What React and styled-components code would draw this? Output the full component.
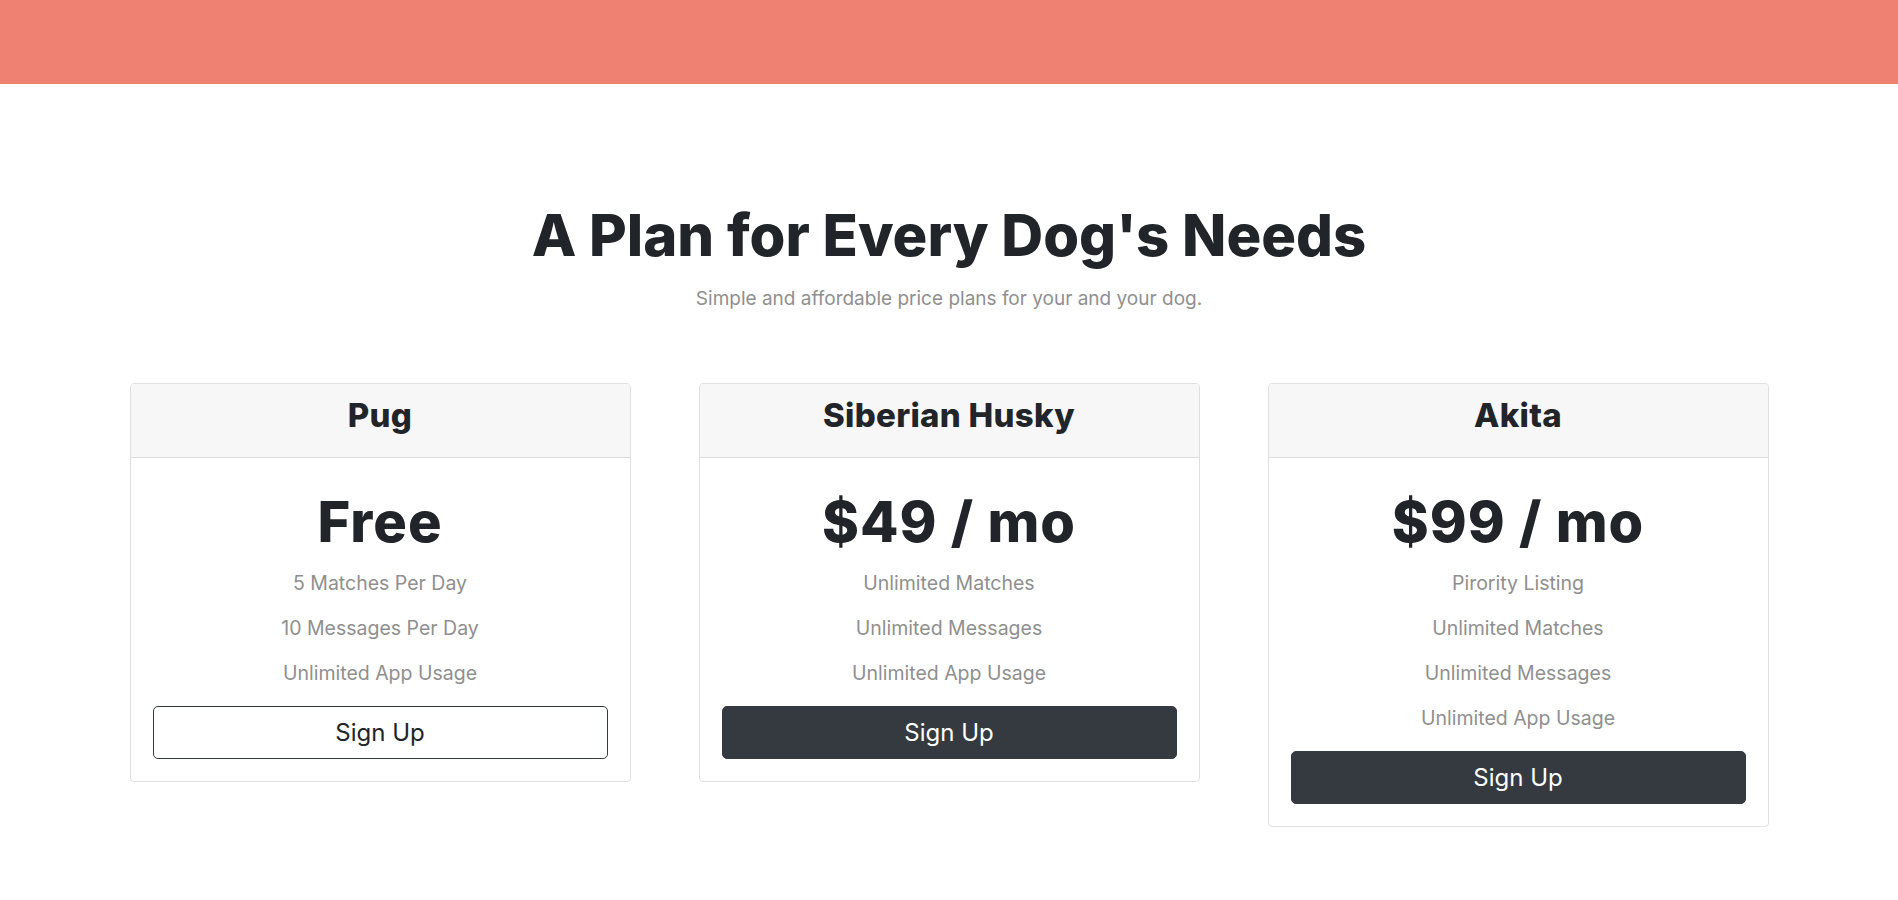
import styled, { createGlobalStyle } from "styled-components";

const GlobalStyle = createGlobalStyle`
  *, *::before, *::after { box-sizing: border-box; }
  html, body {
    margin: 0;
    padding: 0;
    background: #fff;
    font-family: Inter, "Noto Sans", "DejaVu Sans", sans-serif;
    color: #212529;
  }
`;

const TopBar = styled.div`
  height: 84px;
  background: #ef8172;
`;

const Pricing = styled.section`
  padding: 117px 0 60px;
  text-align: center;
`;

const Heading = styled.h2`
  margin: 0;
  font-size: 58px;
  line-height: 1.2;
  font-weight: 800;
  color: #212529;
`;

const Subtitle = styled.p`
  margin: 14px 0 0;
  font-size: 19px;
  line-height: 1.5;
  color: #8f8f8f;
`;

const Columns = styled.div`
  display: flex;
  justify-content: center;
  align-items: flex-start;
  gap: 68px;
  margin-top: 70px;
`;

const Card = styled.div`
  width: 501px;
  border: 1px solid #e0e0e0;
  border-radius: 4px;
  overflow: hidden;
  background: #fff;
`;

const CardHeader = styled.div`
  height: 74px;
  padding-bottom: 9px;
  display: flex;
  align-items: center;
  justify-content: center;
  background: #f7f7f7;
  border-bottom: 1px solid #dcdcdc;
`;

const PlanName = styled.h3`
  margin: 0;
  font-size: 33px;
  font-weight: 800;
  line-height: 1.2;
  letter-spacing: 0.3px;
`;

const CardBody = styled.div`
  padding: 31px 22px 22px;
`;

const Price = styled.h2`
  margin: 0 0 5px;
  font-size: 56px;
  font-weight: 800;
  line-height: 1.2;
  letter-spacing: 1px;
`;

const Feature = styled.p`
  margin: 0;
  font-size: 19.5px;
  line-height: 45px;
  color: #8f8f8f;
`;

const Button = styled.button`
  display: block;
  width: 100%;
  height: 53px;
  margin-top: 10px;
  border-radius: 5px;
  font-family: inherit;
  font-size: 24px;
  font-weight: 400;
  cursor: pointer;
  border: 1px solid #343a40;
  background: ${(props) => (props.dark ? "#343a40" : "#fff")};
  color: ${(props) => (props.dark ? "#fff" : "#212529")};
`;

const plans = [
  {
    name: "Pug",
    price: "Free",
    features: ["5 Matches Per Day", "10 Messages Per Day", "Unlimited App Usage"],
    dark: false,
  },
  {
    name: "Siberian Husky",
    price: "$49 / mo",
    features: ["Unlimited Matches", "Unlimited Messages", "Unlimited App Usage"],
    dark: true,
  },
  {
    name: "Akita",
    price: "$99 / mo",
    features: [
      "Pirority Listing",
      "Unlimited Matches",
      "Unlimited Messages",
      "Unlimited App Usage",
    ],
    dark: true,
  },
];

const App = () => {
  return (
    <>
      <GlobalStyle />
      <TopBar />
      <Pricing>
        <Heading>A Plan for Every Dog's Needs</Heading>
        <Subtitle>Simple and affordable price plans for your and your dog.</Subtitle>
        <Columns>
          {plans.map((plan) => (
            <Card key={plan.name}>
              <CardHeader>
                <PlanName>{plan.name}</PlanName>
              </CardHeader>
              <CardBody>
                <Price>{plan.price}</Price>
                {plan.features.map((f) => (
                  <Feature key={f}>{f}</Feature>
                ))}
                <Button dark={plan.dark}>Sign Up</Button>
              </CardBody>
            </Card>
          ))}
        </Columns>
      </Pricing>
    </>
  );
};

export default App;
